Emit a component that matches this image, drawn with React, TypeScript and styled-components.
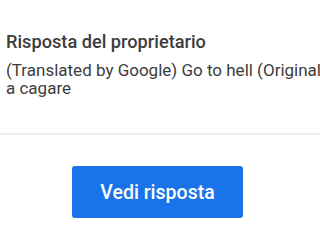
import React from "react";
import styled, { createGlobalStyle } from "styled-components";

const Global = createGlobalStyle`
  html, body { margin: 0; padding: 0; background: #ffffff; overflow: hidden; }
  body { font-family: Roboto, "Noto Sans", Arial, sans-serif; width: 320px; height: 240px; }
`;

const Page = styled.div`
  width: 320px;
  height: 240px;
  overflow: hidden;
  display: flex;
  flex-direction: column;
`;

const Reply = styled.section`
  padding: 30px 0 0 6px;
  height: 135px;
  flex-shrink: 0;
  box-sizing: border-box;
  border-bottom: 2px solid #eeeeee;
`;

const Title = styled.h2`
  margin: 0;
  font-size: 18.2px;
  line-height: 24px;
  font-weight: 500;
  color: #3c3c3c;
`;

const Body = styled.p`
  margin: 7px 0 0 0;
  width: 326px;
  font-size: 17px;
  line-height: 18px;
  font-weight: 400;
  color: #3c3c3c;
`;

const Actions = styled.div`
  display: flex;
  justify-content: center;
  padding: 31px 5px 0 0;
`;

const Button = styled.button`
  width: 171px;
  height: 52px;
  border: none;
  border-radius: 3px;
  background: #1a73e8;
  color: #ffffff;
  font-family: Roboto, "Noto Sans", Arial, sans-serif;
  font-size: 19.5px;
  font-weight: 500;
  cursor: pointer;
`;

export default function App() {
  return (
    <Page>
      <Global />
      <Reply>
        <Title>Risposta del proprietario</Title>
        <Body>(Translated by Google) Go to hell (Original) a cagare</Body>
      </Reply>
      <Actions>
        <Button>Vedi risposta</Button>
      </Actions>
    </Page>
  );
}
